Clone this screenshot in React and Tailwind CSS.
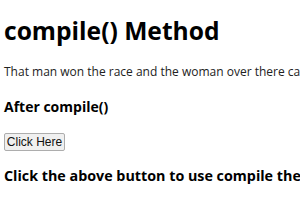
import React from 'react';

const App = () => {
    return (
        <div className="w-[300px] h-[210px] overflow-hidden bg-white text-black px-[4px]" style={{ fontFamily: '"Open Sans", "Noto Sans", sans-serif' }}>
            <h1 className="mt-[16px] text-[24.6px] leading-[30px] font-bold whitespace-nowrap">compile() Method</h1>
            <p className="mt-[18px] text-[12px] leading-[16px] text-[#222] whitespace-nowrap">
                That man won the race and the woman over there came second.
            </p>
            <h3 className="mt-[18px] text-[14px] leading-[18px] font-bold whitespace-nowrap">After compile()</h3>
            <button
                className="mt-[17px] block h-[18px] w-[61px] border border-[#adadad] bg-[#f0f0f0] rounded-[2px] text-[12px] leading-[16px] text-[#111]"
                style={{ fontFamily: '"Liberation Sans", Arial, sans-serif' }}
            >
                Click Here
            </button>
            <h3 className="mt-[16px] text-[14.3px] leading-[18px] font-bold whitespace-nowrap">
                Click the above button to use compile the regular expression
            </h3>
        </div>
    );
};

export default App;
